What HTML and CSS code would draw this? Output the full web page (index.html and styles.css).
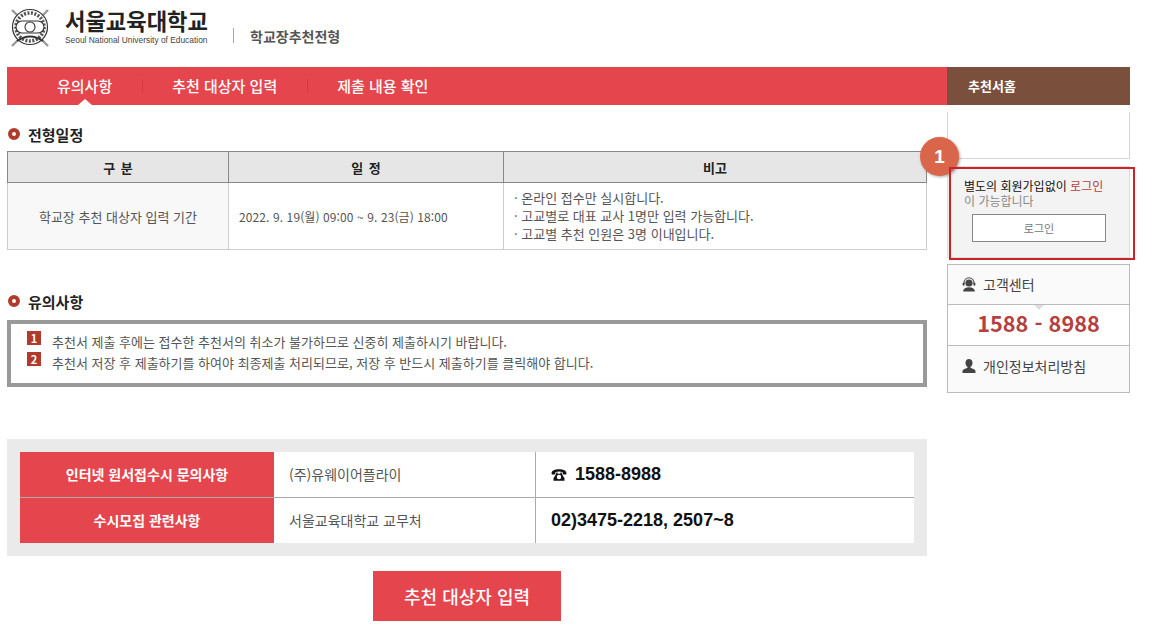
FILE: index.html
```html
<!DOCTYPE html>
<html lang="ko">
  <head>
    <meta charset="UTF-8" />
    <meta name="viewport" content="width=device-width, initial-scale=1.0" />
    <title>서울교육대학교 학교장추천전형</title>
    <link rel="stylesheet" href="styles.css">
  </head>
  <body>
    <div class="header">
      <svg class="seal" width="40" height="40" viewBox="0 0 40 40" fill="none" stroke="#333">
        <path d="M2 3 L38 39 M38 3 L2 39" stroke="#999" stroke-width="2.4" />
        <circle cx="20" cy="20" r="17.5" fill="#fff" stroke-width="1.2" />
        <circle cx="20" cy="20" r="14" stroke-width="3.600" stroke-dasharray="2 1.500" stroke="#555" />
        <rect x="6" y="14" width="28" height="12" rx="6" fill="#fff" stroke-width="1.1" />
        <circle cx="20" cy="20" r="5" fill="#fff" stroke-width="1.1" />
        <path d="M7 34 Q20 25 33 34" stroke-width="2" />
      </svg>
      <div class="logo">
        <div class="logo-ko">서울교육대학교</div>
        <div class="logo-en">Seoul National University of Education</div>
      </div>
      <div class="header-title">학교장추천전형</div>
    </div>

    <div class="nav">
      <ul class="menu">
        <li class="on">유의사항</li>
        <li>추천 대상자 입력</li>
        <li>제출 내용 확인</li>
      </ul>
      <div class="nav-side">추천서홈</div>
    </div>

    <div class="content">
      <div class="main">
        <h3 class="title">전형일정</h3>
        <table class="schedule">
          <tr>
            <th class="c1">구 분</th>
            <th class="c2">일 정</th>
            <th>비고</th>
          </tr>
          <tr>
            <td class="c1 gray">학교장 추천 대상자 입력 기간</td>
            <td class="c2 left date">2022. 9. 19(월) 09:00 ~ 9. 23(금) 18:00</td>
            <td class="left">
              <p>· 온라인 접수만 실시합니다.</p>
              <p>· 고교별로 대표 교사 1명만 입력 가능합니다.</p>
              <p>· 고교별 추천 인원은 3명 이내입니다.</p>
            </td>
          </tr>
        </table>

        <h3 class="title second">유의사항</h3>
        <div class="notice">
          <p><span class="num">1</span>추천서 제출 후에는 접수한 추천서의 취소가 불가하므로 신중히 제출하시기 바랍니다.</p>
          <p><span class="num">2</span>추천서 저장 후 제출하기를 하여야 최종제출 처리되므로, 저장 후 반드시 제출하기를 클릭해야 합니다.</p>
        </div>

        <div class="contact">
          <div class="contact-row">
            <div class="contact-label">인터넷 원서접수시 문의사항</div>
            <div class="contact-name">(주)유웨이어플라이</div>
            <div class="contact-tel">
              <svg class="tel-icon" width="16" height="12" viewBox="0 0 16 12" fill="#111">
                <path d="M0.500 4.500C0.500 1.500 4 0.300 8 0.300s7.500 1.200 7.500 4.200c0 .6-.3.9-.9.9h-2c-.6 0-.9-.3-.9-.9V3.300C10.500 2.800 9.300 2.600 8 2.600s-2.500.2-3.700.7v1.200c0 .6-.3.9-.9.9h-2c-.6 0-.9-.3-.9-.9z" />
                <path d="M5.400 3.600h1.200v1.200h2.800V3.600h1.200l.6 2 2.300 3.600v2.500H2.500V9.200l2.300-3.600z" />
                <circle cx="8" cy="8" r="2.200" fill="#fff" />
              </svg>
              1588-8988
            </div>
          </div>
          <div class="contact-row">
            <div class="contact-label">수시모집 관련사항</div>
            <div class="contact-name">서울교육대학교 교무처</div>
            <div class="contact-tel">02)3475-2218, 2507~8</div>
          </div>
        </div>

        <div class="actions">
          <button class="btn-next">추천 대상자 입력</button>
        </div>
      </div>

      <div class="side">
        <div class="side-blank"></div>
        <div class="login">
          <span class="badge">1</span>
          <span class="marker"></span>
          <p class="login-msg">별도의 회원가입없이 <em>로그인</em><br /><span>이 가능합니다</span></p>
          <button class="btn-login">로그인</button>
        </div>
        <div class="help">
          <div class="help-row">
            <svg width="16" height="16" viewBox="0 0 16 16" fill="#444">
              <circle cx="8" cy="7" r="3.6" />
              <path d="M2.500 8V6.800a5.500 5.500 0 0 1 11 0V8h-1V6.800a4.500 4.500 0 0 0-9 0V8z" />
              <rect x="1.6" y="6.4" width="2" height="3.4" rx="1" />
              <rect x="12.4" y="6.4" width="2" height="3.4" rx="1" />
              <path d="M2 15.500c.4-2.800 2.800-4.200 6-4.200s5.600 1.400 6 4.200z" />
            </svg>
            고객센터
          </div>
          <div class="help-tel">1588 - 8988</div>
          <div class="help-row last">
            <svg width="16" height="16" viewBox="0 0 16 16" fill="#444">
              <path d="M8 1c2.200 0 3.500 1.700 3.500 3.900 0 1.700-.8 3.200-1.900 3.900v1.100c2.300.6 4.900 1.500 4.900 3.200V15h-13v-1.900c0-1.700 2.600-2.600 4.900-3.200V8.800C5.300 8.100 4.500 6.600 4.500 4.900 4.500 2.700 5.800 1 8 1z" />
            </svg>
            개인정보처리방침
          </div>
        </div>
      </div>
    </div>
  </body>
</html>
```

FILE: styles.css
```css
* {
  margin: 0;
  padding: 0;
  box-sizing: border-box;
}
body {
  background: #fff;
  color: #555;
  font-family: "Noto Sans CJK KR", "Noto Sans", sans-serif;
  font-size: 12px;
}
ul {
  list-style: none;
}

/* header */
.header {
  height: 67px;
  display: flex;
  align-items: flex-start;
  padding: 7px 0 0 10px;
}
.seal {
  width: 40px;
  height: 40px;
  margin-right: 15px;
}
.logo {
  width: 144px;
  padding-top: 1px;
}
.logo-ko {
  font-size: 22.2px;
  line-height: 25px;
  font-weight: 700;
  color: #222;
  white-space: nowrap;
}
.logo-en {
  margin-top: 2px;
  font-family: "Liberation Sans", sans-serif;
  font-size: 8.4px;
  line-height: 10px;
  color: #444;
  white-space: nowrap;
}
.header-title {
  margin: 21px 0 0 24px;
  padding-left: 16px;
  height: 15px;
  line-height: 16px;
  font-size: 14px;
  font-weight: 700;
  color: #555;
  border-left: 1px solid #aaa;
  white-space: nowrap;
}

/* nav */
.nav {
  display: flex;
  margin-left: 7px;
  width: 1123px;
  height: 38px;
}
.menu {
  display: flex;
  width: 940px;
  background: #e5454d;
  align-items: center;
  padding-left: 20px;
}
.menu li {
  position: relative;
  padding: 0 30px;
  height: 38px;
  line-height: 38px;
  font-size: 15px;
  font-weight: 500;
  color: #fff;
  white-space: nowrap;
}
.menu li + li::before {
  content: "";
  position: absolute;
  left: 0;
  top: 12px;
  height: 14px;
  border-left: 1px solid #d33a42;
}
.menu li.on::after {
  content: "";
  position: absolute;
  left: 50%;
  bottom: 0;
  margin-left: -7px;
  border: 7px solid transparent;
  border-top: 0;
  border-bottom: 6px solid #fff;
}
.nav-side {
  width: 183px;
  background: #7a4f3c;
  color: #fff;
  font-size: 13px;
  font-weight: 700;
  line-height: 38px;
  padding-left: 21px;
}

/* main column */
.content {
  display: flex;
  margin-left: 7px;
  width: 1123px;
}
.main {
  width: 920px;
}
.title {
  display: flex;
  align-items: center;
  height: 20px;
  margin: 19px 0 7px;
  font-size: 15px;
  font-weight: 700;
  color: #222;
}
.title::before {
  content: "";
  box-sizing: border-box;
  width: 12px;
  height: 12px;
  margin: 0 8px 0 1px;
  border: 4px solid #b23a2c;
  border-radius: 50%;
}
.title.second {
  margin: 41px 0 9px;
}
.schedule {
  width: 920px;
  border-collapse: collapse;
  table-layout: fixed;
}
.schedule th {
  height: 31px;
  background: #e6e6e6;
  border: 1px solid #888;
  font-size: 13px;
  font-weight: 700;
  word-spacing: 2px;
  color: #222;
}
.schedule td {
  height: 67px;
  border: 1px solid #ccc;
  text-align: center;
  font-size: 13px;
  color: #555;
}
.schedule .c1 {
  width: 221px;
}
.schedule .c2 {
  width: 275px;
}
.schedule .gray {
  background: #f8f8f8;
}
.schedule .left {
  text-align: left;
  padding-left: 10px;
}
.schedule .date {
  font-size: 12px;
  letter-spacing: 0.1px;
}
.schedule p {
  line-height: 18px;
}
.notice {
  height: 67px;
  border: 4px solid #999;
  padding: 7px 16px;
}
.notice p {
  display: flex;
  align-items: center;
  height: 21px;
  font-size: 13px;
  color: #555;
  white-space: nowrap;
}
.num {
  width: 14px;
  height: 14px;
  margin-right: 11px;
  margin-top: -7px;
  background: #b23a2c;
  color: #fff;
  font-size: 11px;
  font-weight: 700;
  line-height: 14px;
  text-align: center;
}

/* contact */
.contact {
  margin-top: 52px;
  padding: 13px;
  background: #eaeaea;
}
.contact-row {
  display: flex;
  height: 45px;
  background: #fff;
}
.contact-row + .contact-row {
  height: 46px;
  border-top: 1px solid #aaa;
}
.contact-label {
  width: 254px;
  background: #e5454d;
  color: #fff;
  font-size: 14px;
  font-weight: 700;
  line-height: 45px;
  text-align: center;
}
.contact-name {
  width: 262px;
  padding-left: 15px;
  border-right: 1px solid #aaa;
  font-size: 14px;
  line-height: 45px;
  color: #555;
}
.contact-tel {
  padding-left: 15px;
  font-family: "Liberation Sans", sans-serif;
  font-size: 18px;
  font-weight: 700;
  line-height: 45px;
  color: #111;
}
.tel-icon {
  margin-right: 3px;
  vertical-align: -1px;
}
.actions {
  display: flex;
  justify-content: center;
  margin-top: 15px;
}
.btn-next {
  width: 188px;
  height: 50px;
  border: 0;
  background: #e5454d;
  color: #fff;
  font-family: inherit;
  font-size: 18px;
  font-weight: 500;
}

/* side column */
.side {
  width: 183px;
  margin-left: 20px;
}
.side-blank {
  height: 47px;
  margin-top: 7px;
  border: 1px solid #d5d5d5;
  border-top: 0;
}
.login {
  position: relative;
  height: 92px;
  margin-top: 7px;
  padding: 11px 0 0 16px;
  background: #f3f3f3;
  border: 1px solid #ddd;
}
.login-msg {
  font-size: 12px;
  line-height: 15px;
  color: #111;
  white-space: nowrap;
}
.login-msg em {
  font-style: normal;
  color: #b5413f;
}
.login-msg span {
  color: #888;
}
.btn-login {
  display: block;
  width: 134px;
  height: 28px;
  margin: 6px 0 0 8px;
  border: 1px solid #888;
  background: #fff;
  color: #777;
  font-family: inherit;
  font-size: 11px;
}
.marker {
  position: absolute;
  left: 1px;
  top: 0;
  width: 186px;
  height: 93px;
  border: 2px solid #cc2229;
}
.badge {
  position: absolute;
  left: -28px;
  top: -30px;
  width: 39px;
  height: 39px;
  border-radius: 50%;
  background: #d9664a;
  box-shadow: 1px 1px 3px rgba(0, 0, 0, 0.35);
  color: #fff;
  font-family: "Liberation Sans", sans-serif;
  font-size: 19px;
  font-weight: 700;
  line-height: 39px;
  text-align: center;
}
.help {
  margin-top: 6px;
  border: 1px solid #bbb;
}
.help-row {
  display: flex;
  align-items: center;
  gap: 6px;
  height: 39px;
  padding: 0 0 1px 13px;
  background: #fafafa;
  font-size: 14px;
  color: #444;
}
.help-row.last {
  height: 47px;
  padding-bottom: 6px;
  border-top: 1px solid #bbb;
}
.help-tel {
  position: relative;
  height: 41px;
  border-top: 1px solid #bbb;
  color: #b5413f;
  font-size: 21.7px;
  font-weight: 700;
  line-height: 36px;
  text-align: center;
  background: #fff;
}
.help-tel::before {
  content: "";
  position: absolute;
  left: 50%;
  top: 0;
  margin-left: -5px;
  border: 5px solid transparent;
  border-top: 5px solid #ddd;
  border-bottom: 0;
}
```
